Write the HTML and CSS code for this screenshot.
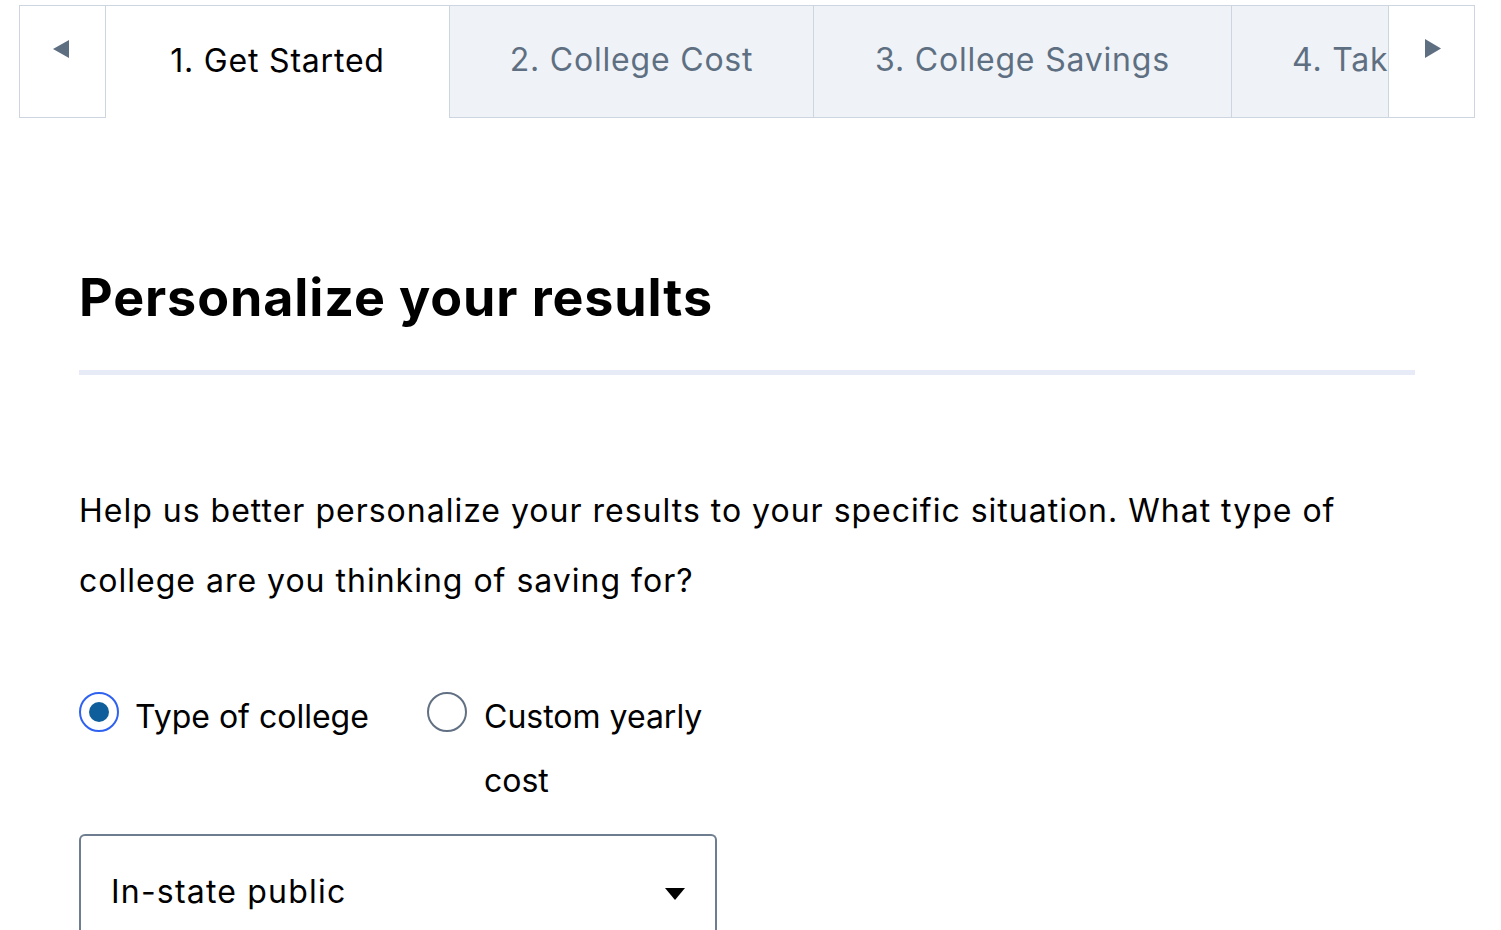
FILE: index.html
```html
<!DOCTYPE html>
<html lang="en">
<head>
<meta charset="utf-8">
<title>Personalize your results</title>
<link rel="stylesheet" href="styles.css">
</head>
<body>
<div class="page">
  <nav class="tabbar">
    <button class="nav-btn nav-left" aria-label="Previous">
      <svg width="16" height="18" viewBox="0 0 16 18"><path d="M16 0 L16 18 L0 9 Z" fill="#5f6f82"/></svg>
    </button>
    <div class="tabs">
      <div class="tab active">1. Get Started</div>
      <div class="tab t2">2. College Cost</div>
      <div class="tab t3">3. College Savings</div>
      <div class="tab t4">4. Take Action</div>
    </div>
    <button class="nav-btn nav-right" aria-label="Next">
      <svg width="16" height="19" viewBox="0 0 16 19"><path d="M0 0 L0 19 L16 9.5 Z" fill="#5f6f82"/></svg>
    </button>
  </nav>

  <main class="content">
    <h1 class="title">Personalize your results</h1>
    <hr class="divider">
    <p class="intro">Help us better personalize your results to your specific situation. What type of college are you thinking of saving for?</p>

    <div class="radios">
      <label class="radio first">
        <span class="ring checked"><span class="dot"></span></span>
        <span class="radio-label">Type of college</span>
      </label>
      <label class="radio second">
        <span class="ring"></span>
        <span class="radio-label">Custom yearly cost</span>
      </label>
    </div>

    <div class="select">
      <span class="select-value">In-state public</span>
      <svg class="caret" width="20" height="12" viewBox="0 0 20 12"><path d="M0 0 L20 0 L10 12 Z" fill="#000"/></svg>
    </div>
  </main>
</div>
</body>
</html>
```

FILE: styles.css
```css
html, body {
  margin: 0;
  padding: 0;
  background: #fff;
}
body {
  font-family: Inter, "Noto Sans", "Liberation Sans", sans-serif;
  color: #000;
}
.page {
  padding: 5px 26px 0 19px;
}
.tabbar {
  display: flex;
  height: 113px;
  box-sizing: border-box;
}
.nav-btn {
  flex: 0 0 auto;
  width: 87px;
  height: 113px;
  background: #fff;
  border: 1px solid #cdd5e0;
  box-sizing: border-box;
  padding: 0;
  margin: 0;
  display: flex;
  justify-content: center;
  align-items: flex-start;
  cursor: pointer;
}
.nav-left {
  padding-top: 34px;
  padding-right: 3px;
}
.nav-right {
  padding-top: 33px;
  padding-left: 2px;
}
.tabs {
  flex: 1 1 auto;
  display: flex;
  overflow: hidden;
  min-width: 0;
}
.tab {
  flex: 0 0 auto;
  box-sizing: border-box;
  height: 113px;
  display: flex;
  align-items: center;
  justify-content: center;
  font-size: 32px;
  letter-spacing: 0.8px;
  color: #5f6f82;
  background: #eff3f7;
  border-top: 1px solid #cdd5e0;
  border-bottom: 1px solid #cdd5e0;
  border-left: 1px solid #cdd5e0;
  white-space: nowrap;
  padding-bottom: 4px;
}
.tab.active {
  width: 343px;
  background: #fff;
  color: #000;
  border-left: none;
  border-bottom: none;
}
.t2 { width: 364px; }
.t3 { width: 418px; }
.t4 { width: 200px; justify-content: flex-start; padding-left: 60px; }

.content {
  padding: 150px 60px 0 60px;
}
.title {
  margin: 0;
  font-size: 52px;
  font-weight: 700;
  line-height: 60px;
  letter-spacing: 0.9px;
}
.divider {
  margin: 42px 0 0 0;
  border: none;
  height: 5px;
  background: #e6ebf7;
}
.intro {
  margin: 101px 0 0 0;
  font-size: 32px;
  line-height: 70px;
  letter-spacing: 1px;
  max-width: 1336px;
}
.radios {
  display: flex;
  align-items: flex-start;
  margin-top: 69px;
}
.radio {
  display: flex;
  align-items: flex-start;
  font-size: 32px;
  line-height: 64px;
}
.radio.first {
  width: 348px;
}
.radio.second {
  width: 300px;
}
.radio.second .ring {
  margin-right: 17px;
}
.ring {
  flex: 0 0 auto;
  width: 40px;
  height: 40px;
  box-sizing: border-box;
  border-radius: 50%;
  border: 2px solid #617083;
  margin-top: 7px;
  margin-right: 16px;
  display: flex;
  align-items: center;
  justify-content: center;
}
.ring.checked {
  border-color: #2f62f0;
}
.dot {
  width: 20px;
  height: 20px;
  border-radius: 50%;
  background: #0f5e9c;
}
.radio.second .radio-label {
  width: 230px;
}
.select {
  margin-top: 21px;
  width: 638px;
  height: 112px;
  box-sizing: border-box;
  border: 2px solid #6e7d8f;
  border-bottom: none;
  border-radius: 6px 6px 0 0;
  display: flex;
  align-items: center;
  justify-content: space-between;
  padding: 0 30px 0 30px;
  font-size: 32px;
  letter-spacing: 1.2px;
}
.caret {
  margin-top: 6px;
}
```
